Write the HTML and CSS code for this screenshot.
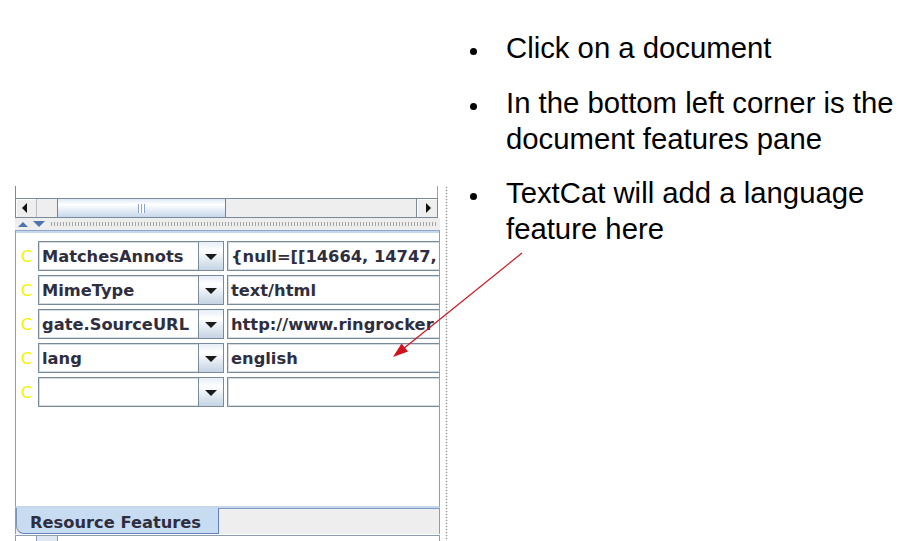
FILE: index.html
```html
<!DOCTYPE html>
<html lang="en">
<head>
<meta charset="UTF-8">
<meta name="viewport" content="width=device-width, initial-scale=1.0">
<title>Document features pane</title>
<link rel="stylesheet" href="styles.css">
</head>
<body>

<div class="page">
    <div class="gate">
        <div class="widget">
            <div class="viewport"></div>
            <div class="hscroll">
                <div class="sb-btn sb-left"><span class="tri-left"></span></div>
                <div class="sb-track">
                    <div class="sb-thumb"><span class="grip"></span></div>
                </div>
                <div class="sb-btn sb-right"><span class="tri-right"></span></div>
            </div>
            <div class="divider">
                <span class="tri-up"></span>
                <span class="tri-down"></span>
                <span class="dots"></span>
            </div>
            <div class="features">
                <div class="row">
                    <span class="flag">C</span>
                    <div class="combo"><span class="name">MatchesAnnots</span><span class="drop"><i></i></span></div>
                    <div class="value">{null=[[14664, 14747, 1</div>
                </div>
                <div class="row">
                    <span class="flag">C</span>
                    <div class="combo"><span class="name">MimeType</span><span class="drop"><i></i></span></div>
                    <div class="value">text/html</div>
                </div>
                <div class="row">
                    <span class="flag">C</span>
                    <div class="combo"><span class="name">gate.SourceURL</span><span class="drop"><i></i></span></div>
                    <div class="value">http://www.ringrocker</div>
                </div>
                <div class="row">
                    <span class="flag">C</span>
                    <div class="combo"><span class="name">lang</span><span class="drop"><i></i></span></div>
                    <div class="value">english</div>
                </div>
                <div class="row">
                    <span class="flag">C</span>
                    <div class="combo"><span class="name"></span><span class="drop"><i></i></span></div>
                    <div class="value"></div>
                </div>
            </div>
            <div class="tabs">
                <div class="tab">Resource Features</div>
            </div>
            <div class="below"><span class="stub"></span></div>
        </div>
        <div class="splitter"></div>
    </div>

    <ul class="notes">
        <li>Click on a document</li>
        <li>In the bottom left corner is the document features pane</li>
        <li>TextCat will add a language feature here</li>
    </ul>
</div>

<svg class="pointer" width="903" height="541" viewBox="0 0 903 541">
    <line x1="522" y1="253" x2="403" y2="349" stroke="#d0131c" stroke-width="1.2"/>
    <polygon points="393,357 401.5,343.5 408,351.5" fill="#d0131c"/>
</svg>

</body>
</html>
```

FILE: styles.css
```css
html, body {
    margin: 0;
    padding: 0;
    background: #ffffff;
}
body {
    width: 903px;
    height: 541px;
    overflow: hidden;
    position: relative;
}
.page {
    display: flex;
    height: 541px;
}
.gate {
    display: flex;
    margin-left: 15px;
    padding-top: 186px;
    gap: 5px;
}
.widget {
    width: 425px;
    display: flex;
    flex-direction: column;
    font-family: "DejaVu Sans", sans-serif;
    font-weight: bold;
    font-size: 16.3px;
    color: #2e2e40;
}
.viewport {
    height: 12px;
    margin-right: 2px;
    border-left: 1px solid #7a8a99;
    border-right: 1px solid #9aa4ae;
    background: #ffffff;
}
.hscroll {
    display: flex;
    height: 18px;
    margin-right: 2px;
    border: 1px solid #7a8a99;
    background: #eeeeee;
}
.sb-btn {
    width: 20px;
    display: flex;
    align-items: center;
    justify-content: center;
    background: #eeeeee;
    box-shadow: inset 1px 1px 0 #ffffff;
}
.sb-left {
    border-right: 1px solid #b5bcc4;
}
.sb-right {
    border-left: 1px solid #7a8a99;
}
.tri-left {
    width: 0;
    height: 0;
    border-top: 5px solid transparent;
    border-bottom: 5px solid transparent;
    border-right: 5px solid #111111;
    margin-right: 3px;
}
.tri-right {
    width: 0;
    height: 0;
    border-top: 5px solid transparent;
    border-bottom: 5px solid transparent;
    border-left: 5px solid #111111;
    margin-left: 3px;
}
.sb-track {
    flex: 1;
    display: flex;
}
.sb-thumb {
    margin-left: 20px;
    width: 167px;
    border-left: 1px solid #6382bf;
    border-right: 1px solid #6382bf;
    background: linear-gradient(#dde8f3, #ffffff 30%, #c7d8ec);
    display: flex;
    align-items: center;
    justify-content: center;
}
.grip {
    width: 7px;
    height: 9px;
    background: repeating-linear-gradient(90deg, #8aa4cf 0 1px, #ffffff 1px 3px);
}
.divider {
    height: 12px;
    display: flex;
    align-items: center;
    gap: 5px;
    padding-left: 3px;
    background: #eeeeee;
}
.tri-up {
    width: 0;
    height: 0;
    border-left: 5px solid transparent;
    border-right: 5px solid transparent;
    border-bottom: 5px solid #4f73ad;
}
.tri-down {
    width: 0;
    height: 0;
    border-left: 6px solid transparent;
    border-right: 6px solid transparent;
    border-top: 6px solid #4f73ad;
}
.dots {
    flex: 1;
    height: 4px;
    margin-right: 2px;
    background-image: radial-gradient(circle, #a2a2a2 0.7px, transparent 1.1px);
    background-size: 3px 2px;
}
.features {
    height: 265px;
    padding-top: 10px;
    border-left: 1px solid #8d9db0;
    border-right: 1px solid #8d9db0;
    border-top: 1px solid #8ea7c9;
    box-shadow: inset 0 2px 0 #c4d7ed;
    border-bottom: 2px solid #c4d7ed;
    background: #ffffff;
    overflow: hidden;
}
.row {
    display: flex;
    height: 30px;
    margin-bottom: 4px;
}
.flag {
    flex: none;
    width: 17px;
    padding-left: 5px;
    font-weight: normal;
    font-size: 16.5px;
    line-height: 31px;
    color: #f2f200;
}
.combo {
    flex: none;
    width: 184px;
    display: flex;
    border: 1px solid #7a8a99;
    box-shadow: inset 0 0 0 1px #d3dbe4;
    background: #ffffff;
}
.name {
    flex: 1;
    padding-left: 3px;
    line-height: 29px;
    white-space: nowrap;
    overflow: hidden;
}
.drop {
    flex: none;
    width: 24px;
    border-left: 1px solid #7a8a99;
    background: linear-gradient(#e6eef7, #ffffff 30%, #c4d3e3);
    display: flex;
    align-items: center;
    justify-content: center;
}
.drop i {
    width: 0;
    height: 0;
    border-left: 6px solid transparent;
    border-right: 6px solid transparent;
    border-top: 6px solid #1a1a1a;
    margin-top: 1px;
}
.value {
    flex: none;
    width: 260px;
    margin-left: 3px;
    padding-left: 3px;
    line-height: 29px;
    white-space: nowrap;
    border: 1px solid #7a8a99;
    box-shadow: inset 0 0 0 1px #d3dbe4;
    background: #ffffff;
}
.tabs {
    display: flex;
    height: 26px;
    border-left: 1px solid #8d9db0;
    border-right: 1px solid #8d9db0;
    background: #eeeeee;
    box-shadow: inset 0 1px 0 #7f9cc9;
}
.tab {
    width: 188px;
    padding: 3px 0 0 13px;
    line-height: 23px;
    background: #c8dcf1;
    border-left: 1px solid #7f93b3;
    border-right: 1px solid #6382bf;
    border-bottom: 1px solid #6382bf;
    border-bottom-left-radius: 8px;
    white-space: nowrap;
}
.below {
    flex: 1;
    margin-top: 1px;
    border-top: 1px solid #8d9db0;
    border-left: 1px solid #8d9db0;
    border-right: 1px solid #8d9db0;
    background: #ffffff;
}
.stub {
    display: block;
    width: 20px;
    height: 100%;
    margin-left: 20px;
    border-left: 1px solid #8d9db0;
    border-right: 1px solid #8d9db0;
    background: #dde8f3;
}
.splitter {
    width: 3px;
    height: 355px;
    background-image: radial-gradient(circle, #9c9c9c 0.7px, transparent 1.1px);
    background-size: 3px 3px;
}
.notes {
    list-style: none;
    margin: 0 0 0 22px;
    padding: 30px 0 0 0;
    flex: 1;
    font-family: "Liberation Sans", Arial, sans-serif;
    font-size: 29.3px;
    line-height: 36px;
    color: #000000;
}
.notes li {
    display: flex;
    margin-bottom: 18.5px;
}
.notes li::before {
    content: "";
    flex: none;
    width: 7px;
    height: 7px;
    margin: 18px 29px 0 0;
    border-radius: 50%;
    background: #000000;
}
.pointer {
    position: absolute;
    left: 0;
    top: 0;
    pointer-events: none;
}
```
